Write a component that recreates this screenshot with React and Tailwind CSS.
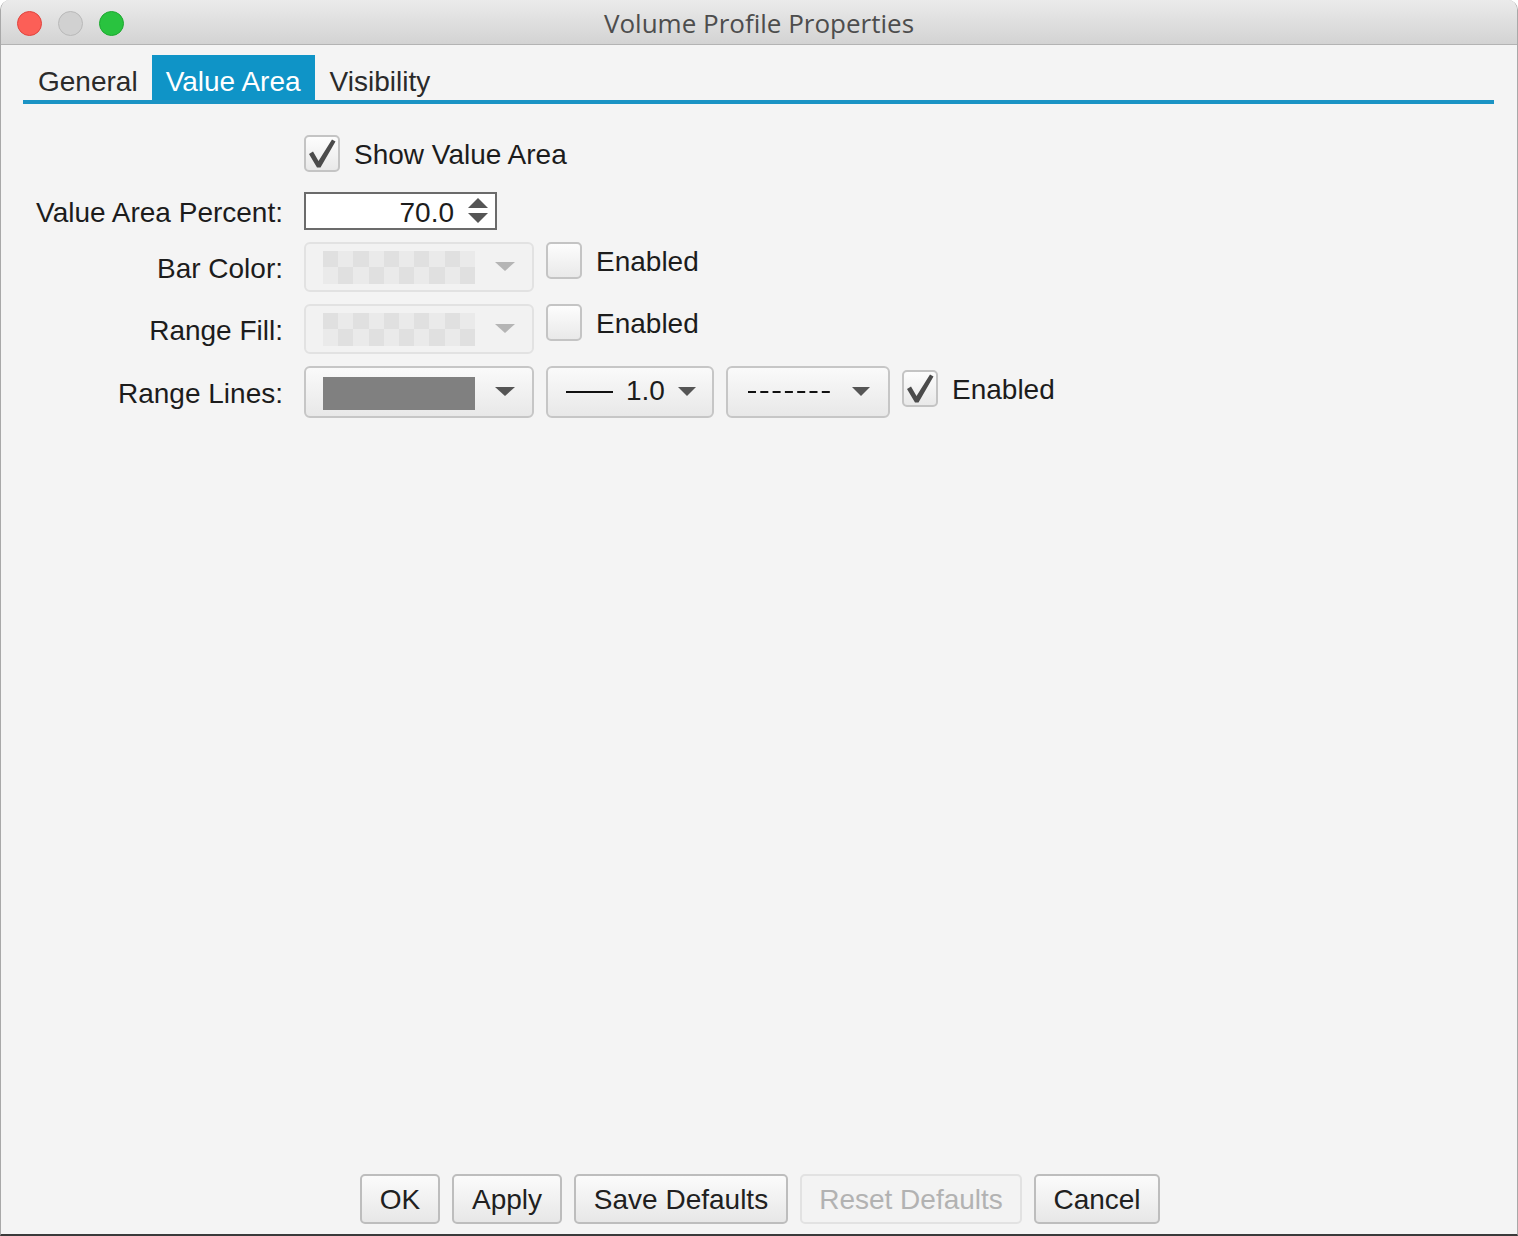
import React from "react";

function Check({ checked, className = "" }) {
  return (
    <div
      className={`w-[36px] h-[37px] shrink-0 rounded-[5px] border-2 border-[#c4c4c4] bg-gradient-to-b from-[#fdfdfd] to-[#e9e9e9] flex items-center justify-center ${className}`}
    >
      {checked && (
        <svg width="32" height="33" viewBox="0 0 32 33">
          <path d="M3 17 L7 14.5 L12.5 24 L26 2.5 L29.5 4.5 L14.5 30.5 L11 30.5 Z" fill="#4b4b4b" />
        </svg>
      )}
    </div>
  );
}

function Arrow({ color = "#555555", w = 20 }) {
  return (
    <svg width={w} height="10" viewBox="0 0 20 10" className="shrink-0" preserveAspectRatio="none">
      <polygon points="0,0 20,0 10,9" fill={color} />
    </svg>
  );
}

function Checker() {
  const cells = [];
  for (let r = 0; r < 2; r++) {
    for (let c = 0; c < 10; c++) {
      const dark = (r + c) % 2 === 0;
      cells.push(
        <div key={`${r}-${c}`} className={dark ? "bg-[#e0e0e0]" : "bg-[#eaeaea]"} />
      );
    }
  }
  return <div className="w-[152px] h-[33px] grid grid-cols-10 grid-rows-2">{cells}</div>;
}

function Label({ children }) {
  return (
    <div className="w-[282px] shrink-0 pt-[3px] text-right text-[28px] leading-none text-[#1c1c1c]">
      {children}
    </div>
  );
}

function Txt({ children }) {
  return <span className="pt-[3px] text-[28px] leading-none text-[#1c1c1c]">{children}</span>;
}

function Button({ children, w, disabled }) {
  return (
    <div
      className={`${w} h-[50px] pt-[2px] rounded-[5px] border-2 flex items-center justify-center text-[28px] leading-none ${
        disabled
          ? "border-[#e2e2e2] bg-[#f3f3f3] text-[#b2b2b2]"
          : "border-[#bdbdbd] bg-gradient-to-b from-[#fbfbfb] to-[#e7e7e7] text-[#202020]"
      }`}
    >
      {children}
    </div>
  );
}

export default function App() {
  return (
    <div className="w-[1518px] h-[1236px] bg-[#f4f4f4] flex flex-col border-x border-[#a8a8a8] border-b-2 border-b-[#3a3a3a] rounded-t-[10px] overflow-hidden font-['Liberation_Sans',Arial,sans-serif]">
      {/* Title bar */}
      <div className="h-[45px] shrink-0 grid grid-cols-[1fr_auto_1fr] items-center bg-gradient-to-b from-[#ebebeb] to-[#d3d3d3] border-b border-[#b3b3b3]">
        <div className="flex items-center gap-[16px] pl-[16px] pt-[2px]">
          <div className="w-[25px] h-[25px] rounded-full bg-[#fc5f57] border border-[#e0443e]" />
          <div className="w-[25px] h-[25px] rounded-full bg-[#d1d1d1] border border-[#b9b9b9]" />
          <div className="w-[25px] h-[25px] rounded-full bg-[#29c33f] border border-[#1ea830]" />
        </div>
        <div className="pt-[2px] text-[26px] leading-none text-[#4d4d4d] font-['Open_Sans','Liberation_Sans',sans-serif]">
          Volume Profile Properties
        </div>
        <div />
      </div>

      {/* Tabs */}
      <div className="mt-[10px] ml-[22px] mr-[23px] flex border-b-4 border-[#1b93c4] text-[28px] leading-none">
        <div className="h-[45px] pl-[15px] pr-[14px] pt-[8px] flex items-center text-[#2a2a2a]">General</div>
        <div className="h-[45px] px-[14px] pt-[8px] flex items-center bg-[#0f94c7] text-white">Value Area</div>
        <div className="h-[45px] px-[15px] pt-[8px] flex items-center text-[#2a2a2a]">Visibility</div>
      </div>

      {/* Body */}
      <div className="flex-1 flex flex-col">
        {/* Show Value Area */}
        <div className="mt-[31px] h-[37px] flex items-center">
          <Label />
          <div className="ml-[21px] flex items-center gap-[14px]">
            <Check checked />
            <Txt>Show Value Area</Txt>
          </div>
        </div>

        {/* Value Area Percent */}
        <div className="mt-[20px] h-[38px] flex items-center">
          <Label>Value Area Percent:</Label>
          <div className="ml-[21px] w-[193px] h-[38px] border-2 border-[#6b6b6b] bg-white flex items-center justify-end pr-[7px]">
            <Txt>70.0</Txt>
            <svg width="20" height="26" viewBox="0 0 20 26" className="ml-[14px]">
              <polygon points="10,0 20,10 0,10" fill="#555555" />
              <polygon points="0,15 20,15 10,25" fill="#555555" />
            </svg>
          </div>
        </div>

        {/* Bar Color */}
        <div className="mt-[12px] h-[50px] flex items-center">
          <Label>Bar Color:</Label>
          <div className="ml-[21px] flex items-start gap-[12px] h-[50px]">
            <div className="w-[230px] h-[50px] rounded-[6px] border-2 border-[#e2e2e2] bg-[#f2f2f2] flex items-center pl-[17px] pr-[17px] justify-between">
              <Checker />
              <Arrow color="#b5b5b5" />
            </div>
            <div className="flex items-center gap-[14px]">
              <Check />
              <Txt>Enabled</Txt>
            </div>
          </div>
        </div>

        {/* Range Fill */}
        <div className="mt-[12px] h-[50px] flex items-center">
          <Label>Range Fill:</Label>
          <div className="ml-[21px] flex items-start gap-[12px] h-[50px]">
            <div className="w-[230px] h-[50px] rounded-[6px] border-2 border-[#e2e2e2] bg-[#f2f2f2] flex items-center pl-[17px] pr-[17px] justify-between">
              <Checker />
              <Arrow color="#b5b5b5" />
            </div>
            <div className="flex items-center gap-[14px]">
              <Check />
              <Txt>Enabled</Txt>
            </div>
          </div>
        </div>

        {/* Range Lines */}
        <div className="mt-[12px] h-[52px] flex items-center">
          <Label>Range Lines:</Label>
          <div className="ml-[21px] flex items-start gap-[12px] h-[52px]">
            <div className="w-[230px] h-[52px] rounded-[6px] border-2 border-[#c6c6c6] bg-gradient-to-b from-[#fafafa] to-[#e8e8e8] flex items-center pl-[17px] pr-[17px] justify-between">
              <div className="w-[152px] h-[33px] bg-[#808080] mt-[3px]" />
              <Arrow color="#555555" />
            </div>
            <div className="w-[168px] h-[52px] rounded-[6px] border-2 border-[#c6c6c6] bg-gradient-to-b from-[#fafafa] to-[#e8e8e8] flex items-center pl-[18px] pr-[16px]">
              <div className="w-[47px] h-[2px] bg-[#111111]" />
              <span className="ml-[13px]">
                <Txt>1.0</Txt>
              </span>
              <div className="flex-1" />
              <Arrow color="#555555" w={18} />
            </div>
            <div className="w-[164px] h-[52px] rounded-[6px] border-2 border-[#c6c6c6] bg-gradient-to-b from-[#fafafa] to-[#e8e8e8] flex items-center pl-[20px] pr-[18px]">
              <svg width="82" height="4" viewBox="0 0 82 4">
                <line x1="0" y1="2" x2="82" y2="2" stroke="#111111" strokeWidth="2" strokeDasharray="8 4.3" />
              </svg>
              <div className="flex-1" />
              <Arrow color="#555555" w={18} />
            </div>
            <div className="mt-[4px] flex items-center gap-[14px]">
              <Check checked />
              <Txt>Enabled</Txt>
            </div>
          </div>
        </div>

        <div className="flex-1" />

        {/* Buttons */}
        <div className="flex justify-center gap-[12px] pb-[10px] pl-[2px]">
          <Button w="w-[80px]">OK</Button>
          <Button w="w-[110px]">Apply</Button>
          <Button w="w-[214px]">Save Defaults</Button>
          <Button w="w-[222px]" disabled>Reset Defaults</Button>
          <Button w="w-[126px]">Cancel</Button>
        </div>
      </div>
    </div>
  );
}
